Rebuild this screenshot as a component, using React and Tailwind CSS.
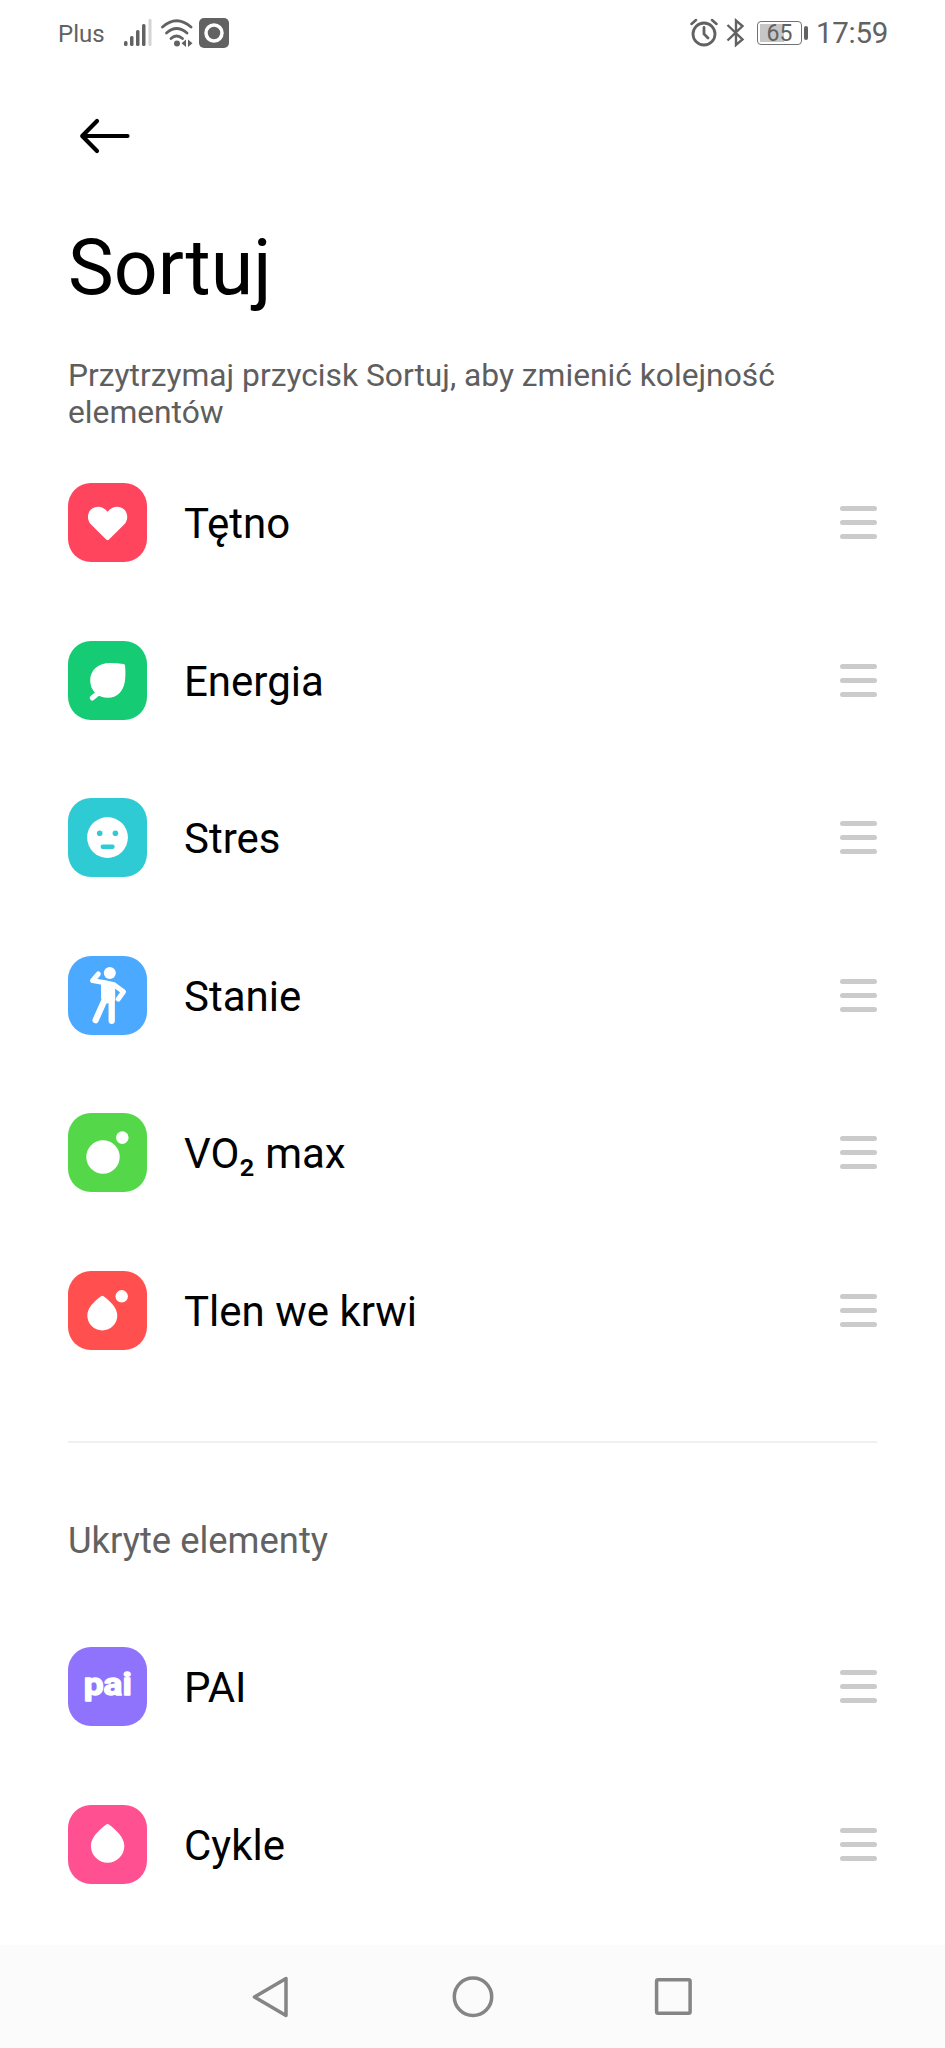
function HeartIcon() {
    return (
        <path
            d="M38.200 56.500 L22.800 41.200 C19 37.200 19 30.500 23 26.600 C27 22.700 33.600 22.800 37.400 26.600 L39.600 28.800 L41.800 26.600 C45.600 22.800 52.200 22.700 56.200 26.600 C60.200 30.500 60.200 37.200 56.400 41.200 L41 56.500 Q39.600 57.900 38.200 56.500 Z"
            fill="white"
        />
    );
}

function LeafIcon() {
    return (
        <>
            <path
                d="M55.500 23 Q57 23.200 57.100 24.800 C57.600 31 57.600 36 56.800 41 C55 50.500 49 56.800 40 56.800 C29.500 56.800 22.200 49.500 22.200 39.500 C22.200 28.500 30.500 22.100 42 22 C46.500 22 51 22.300 55.500 23 Z"
                fill="white"
            />
            <path d="M24.200 57 L31 51.500" stroke="white" strokeWidth="5" strokeLinecap="round" />
        </>
    );
}

function FaceIcon() {
    return (
        <>
            <circle cx="39.500" cy="39.500" r="20.400" fill="white" />
            <circle cx="31.700" cy="35.200" r="2.800" fill="#2ECBD5" />
            <circle cx="47.400" cy="35.200" r="2.800" fill="#2ECBD5" />
            <rect x="32.600" y="46.500" width="14" height="4.600" rx="2" fill="#2ECBD5" />
        </>
    );
}

function StandingIcon() {
    return (
        <g fill="none" stroke="white" strokeLinecap="round" strokeLinejoin="round">
            <circle cx="41.800" cy="17" r="6" fill="white" stroke="none" />
            <path d="M30.300 18 L24.500 24.600 L37 26.700 L46 28.800 L55.500 35.800 L50.300 43" strokeWidth="5" />
            <path d="M34.500 27 L45.500 29 L45.800 44 L39 46 L34.500 42 Z" fill="white" strokeWidth="3" />
            <path d="M37.500 42 L27.600 64.200" strokeWidth="6.300" />
            <path d="M43.700 43 V64.800" strokeWidth="6.300" />
        </g>
    );
}

function BubblesIcon() {
    return (
        <g fill="white">
            <circle cx="35" cy="44" r="16.700" />
            <circle cx="54.300" cy="24.600" r="6.300" />
        </g>
    );
}

function OxygenIcon() {
    return (
        <g fill="white">
            <path d="M33 25.300 Q34.300 24.200 35.600 25.300 C41.500 30 49.300 36.500 49.300 44.500 A15 15 0 0 1 19.300 44.500 C19.300 36.500 27.100 30 33 25.300 Z" />
            <circle cx="53.700" cy="25.300" r="6.200" />
        </g>
    );
}

function PaiIcon() {
    return (
        <text
            x="15.800"
            y="48"
            fontSize="32"
            fontWeight="700"
            fontFamily="Roboto, sans-serif"
            textLength="48"
            lengthAdjust="spacingAndGlyphs"
            fill="white"
            stroke="white"
            strokeWidth="1.400"
            strokeLinejoin="round"
        >
            pai
        </text>
    );
}

function DropIcon() {
    return (
        <path
            d="M38.200 19.600 Q39.600 18.500 41 19.600 C47.500 25 56.300 32 56.300 41 A16.700 16.700 0 0 1 22.900 41 C22.900 32 31.700 25 38.200 19.600 Z"
            fill="white"
        />
    );
}

const visibleItems = [
    { label: "Tętno", color: "bg-[#FF455D]", Icon: HeartIcon },
    { label: "Energia", color: "bg-[#15CB74]", Icon: LeafIcon },
    { label: "Stres", color: "bg-[#2ECBD5]", Icon: FaceIcon },
    { label: "Stanie", color: "bg-[#4BA9FF]", Icon: StandingIcon },
    { label: "VO₂ max", color: "bg-[#54D84A]", Icon: BubblesIcon },
    { label: "Tlen we krwi", color: "bg-[#FF504F]", Icon: OxygenIcon },
];

const hiddenItems = [
    { label: "PAI", color: "bg-[#8F73FD]", Icon: PaiIcon },
    { label: "Cykle", color: "bg-[#FF5191]", Icon: DropIcon },
];

function SortRow({ label, color, Icon }) {
    return (
        <li className="flex h-[157.5px] items-center">
            <div className={`size-[79px] shrink-0 rounded-[23px] ${color}`}>
                <svg viewBox="0 0 79 79" className="size-full">
                    <Icon />
                </svg>
            </div>
            <span className="ml-[37px] flex-1 pt-[3px] text-[42px] leading-[50px] text-black">{label}</span>
            <button aria-label={`Przenieś ${label}`} className="flex w-[37px] flex-col gap-[9px]">
                <span className="h-[5px] rounded-full bg-[#CBCBCB]" />
                <span className="h-[5px] rounded-full bg-[#CBCBCB]" />
                <span className="h-[5px] rounded-full bg-[#CBCBCB]" />
            </button>
        </li>
    );
}

function StatusBar() {
    return (
        <div className="flex h-[66px] items-center justify-between pr-[57px] pl-[58px] text-[#626262]">
            <div className="flex items-center">
                <span className="w-[65px] pt-[2px] text-[24px] leading-none">Plus</span>
                {/* Zasięg */}
                <svg width="30" height="28" viewBox="0 0 30 28" fill="currentColor">
                    <rect x="1" y="22" width="3.500" height="5" rx="1.500" />
                    <rect x="7" y="17" width="3.500" height="10" rx="1.500" />
                    <rect x="13" y="11" width="3.500" height="16" rx="1.500" />
                    <rect x="19" y="5" width="3.500" height="22" rx="1.500" />
                    <rect x="25.500" y="0" width="3" height="27" rx="1" fill="#D4D4D4" />
                </svg>
                {/* Wi-Fi */}
                <svg width="34" height="30" viewBox="0 0 34 30" className="ml-[7px]" fill="none" stroke="currentColor" strokeWidth="2.800" strokeLinecap="round">
                    <path d="M2.500 9 Q16.500 -3.500 31 9" />
                    <path d="M6.500 15 Q16.500 6 27 15" />
                    <path d="M11 20.500 Q16.500 15.500 22.500 20.500" />
                    <circle cx="17" cy="25.500" r="3" fill="currentColor" stroke="none" />
                    <path d="M26 21.500 V29 L21.500 25.300 Z M28 21.500 V29 L32.500 25.300 Z" fill="currentColor" stroke="none" />
                </svg>
                <svg width="30" height="30" viewBox="0 0 30 30" className="ml-[5px]">
                    <rect width="30" height="30" rx="5" fill="currentColor" />
                    <circle cx="15" cy="15" r="8" fill="currentColor" stroke="white" strokeWidth="3.500" />
                </svg>
            </div>
            <div className="flex items-center">
                {/* Budzik */}
                <svg width="28" height="30" viewBox="0 0 28 30" fill="none" stroke="currentColor" strokeWidth="2.800" strokeLinecap="round">
                    <circle cx="14" cy="16" r="11" />
                    <path d="M14 9.500 V16 L18 20" />
                    <path d="M1.500 6 L6 2 M26.500 6 L22 2" strokeWidth="2.500" />
                </svg>
                <svg width="19" height="30" viewBox="0 0 19 30" className="ml-[8px]" fill="none" stroke="currentColor" strokeWidth="2.400">
                    <path d="M1.500 7 L16.500 21.500 L10 27 V2.500 L16.500 8 L1.500 22.500" />
                </svg>
                <div className="ml-[12px] flex items-center gap-[2px]">
                    <div className="relative flex h-[24px] w-[45px] items-center justify-center rounded-[4px] border-[1.5px] border-[#727272]">
                        <div className="absolute top-[2px] bottom-[2px] left-[2px] w-[24px] bg-[#C6C6C6]" />
                        <span className="relative text-[23px] leading-none">65</span>
                    </div>
                    <div className="h-[14px] w-[4px] rounded-[2px] bg-[#626262]" />
                </div>
                <span className="ml-[8px] pt-[2px] text-[29.5px] leading-none tracking-[-0.3px]">17:59</span>
            </div>
        </div>
    );
}

function NavigationBar() {
    return (
        <nav className="flex h-[103px] items-center justify-center gap-[160px] bg-[#FBFBFB] text-[#858585]">
            <svg width="42" height="42" viewBox="0 0 42 42" fill="none" stroke="currentColor" strokeWidth="3.500" strokeLinejoin="round">
                <path d="M36 2.500 V39.500 L4.500 21 Z" />
            </svg>
            <svg width="42" height="42" viewBox="0 0 42 42" fill="none" stroke="currentColor" strokeWidth="3.500">
                <circle cx="21" cy="20.700" r="18.700" />
            </svg>
            <svg width="42" height="42" viewBox="0 0 42 42" fill="none" stroke="currentColor" strokeWidth="3.500">
                <rect x="2.600" y="3.800" width="33.500" height="33.500" rx="1.500" />
            </svg>
        </nav>
    );
}

export default function App() {
    return (
        <div className="flex h-[2048px] w-[945px] flex-col overflow-hidden bg-white font-[Roboto,sans-serif]">
            <StatusBar />
            <main className="flex-1 px-[68px]">
                <button aria-label="Wstecz" className="mt-[35px] ml-[2px] block size-[70px]">
                    <svg viewBox="0 0 70 70" className="size-full" fill="none" stroke="black" strokeWidth="4.200" strokeLinecap="round" strokeLinejoin="round">
                        <path d="M57.500 35 H12.500 M27 20 L12.200 35 L27 50" />
                    </svg>
                </button>
                <h1 className="mt-[52px] text-[77px] leading-[90px] text-black">Sortuj</h1>
                <p className="mt-[44px] h-[74px] w-[760px] text-[31.75px] leading-[37px] text-[#5E5E5E]">
                    Przytrzymaj przycisk Sortuj, aby zmienić kolejność elementów
                </p>
                <ul className="mt-[13px]">
                    {visibleItems.map((item) => (
                        <SortRow key={item.label} {...item} />
                    ))}
                </ul>
                <hr className="mt-[52px] border-t-2 border-[#F0F0F0]" />
                <h2 className="mt-[74px] text-[36.4px] leading-[48px] text-[#626262]">Ukryte elementy</h2>
                <ul className="mt-[43px]">
                    {hiddenItems.map((item) => (
                        <SortRow key={item.label} {...item} />
                    ))}
                </ul>
            </main>
            <NavigationBar />
        </div>
    );
}
